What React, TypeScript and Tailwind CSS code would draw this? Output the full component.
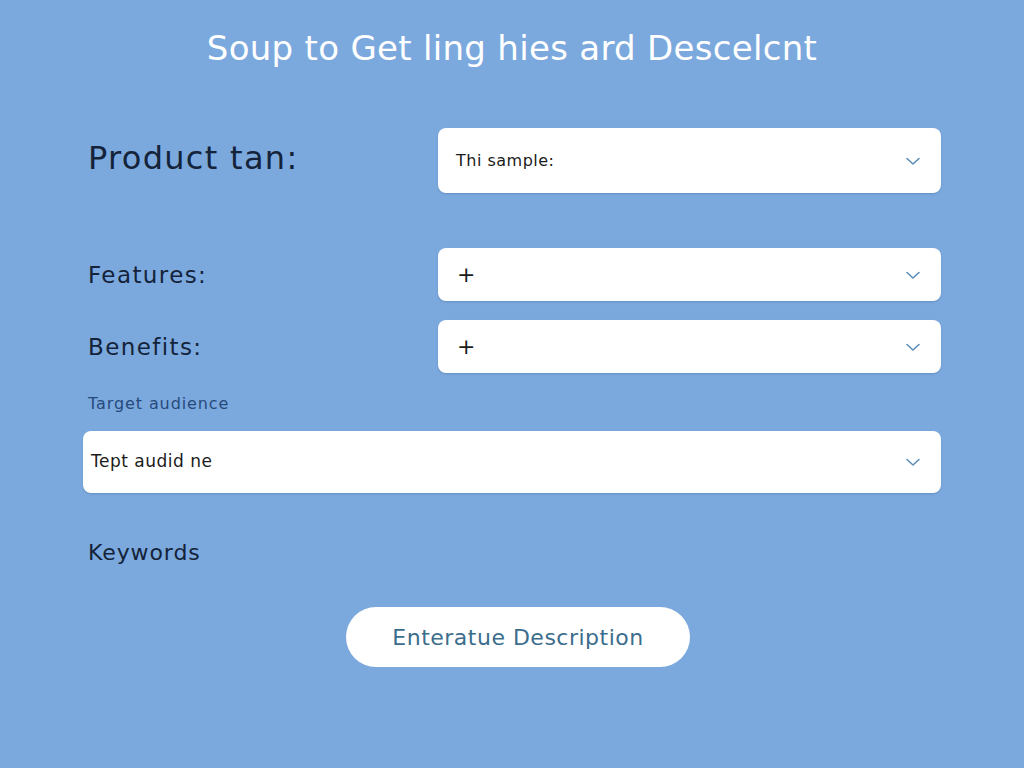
import React from "react";

const font = { fontFamily: '"DejaVu Sans", "Noto Sans", sans-serif' };

function Chevron() {
  return (
    <svg width="18" height="18" viewBox="0 0 18 18" fill="none">
      <path d="M3 6.5 L9 12 L15 6.5" stroke="#5b8db8" strokeWidth="1.6" strokeLinecap="round" strokeLinejoin="round" />
    </svg>
  );
}

function SelectBox({ children, className }: { children: React.ReactNode; className: string }) {
  return (
    <div className={`flex items-center justify-between bg-white rounded-lg shadow-[0_1px_2px_rgba(40,70,110,0.25)] ${className}`}>
      {children}
      <Chevron />
    </div>
  );
}

export default function App() {
  return (
    <div className="w-[1024px] h-[768px] bg-[#7ba9de] text-[#142339]" style={font}>
      <h1 className="pt-[26px] text-center text-[34px] leading-[44px] text-white tracking-[0.3px]">
        Soup to Get ling hies ard Descelcnt
      </h1>

      <div className="ml-[83px] w-[858px] mt-[58px] flex flex-col">
        <div className="flex items-center">
          <div className="w-[355px] pl-[5px] text-[32px] leading-[40px] tracking-[1.3px] -mt-[6px]">Product tan:</div>
          <SelectBox className="flex-1 h-[65px] pl-[18px] pr-[19px]">
            <span className="text-[16px] tracking-[0.5px] text-[#1b1b1b]">Thi sample:</span>
          </SelectBox>
        </div>

        <div className="flex items-center mt-[55px]">
          <div className="w-[355px] pl-[5px] text-[23px] leading-[30px] tracking-[1.4px]">Features:</div>
          <SelectBox className="flex-1 h-[53px] pl-[19px] pr-[19px]">
            <span className="text-[22px] text-[#1b1b1b]">+</span>
          </SelectBox>
        </div>

        <div className="flex items-center mt-[19px]">
          <div className="w-[355px] pl-[5px] text-[23px] leading-[30px] tracking-[1.4px]">Benefits:</div>
          <SelectBox className="flex-1 h-[53px] pl-[19px] pr-[19px]">
            <span className="text-[22px] text-[#1b1b1b]">+</span>
          </SelectBox>
        </div>

        <div className="mt-[19px] pl-[5px] text-[16px] leading-[24px] tracking-[0.9px] text-[#264a7c]">Target audience</div>

        <SelectBox className="mt-[15px] h-[62px] pl-[8px] pr-[19px]">
          <span className="text-[17px] tracking-[0.5px] text-[#1b1b1b]">Tept audid ne</span>
        </SelectBox>

        <div className="mt-[46px] pl-[5px] text-[22px] leading-[28px] tracking-[0.9px]">Keywords</div>

        <div className="mt-[40px] flex justify-center pl-[12px]">
          <button className="w-[344px] h-[60px] rounded-full bg-white text-[22px] tracking-[0.5px] text-[#3b6d8c]">
            Enteratue Description
          </button>
        </div>
      </div>
    </div>
  );
}
